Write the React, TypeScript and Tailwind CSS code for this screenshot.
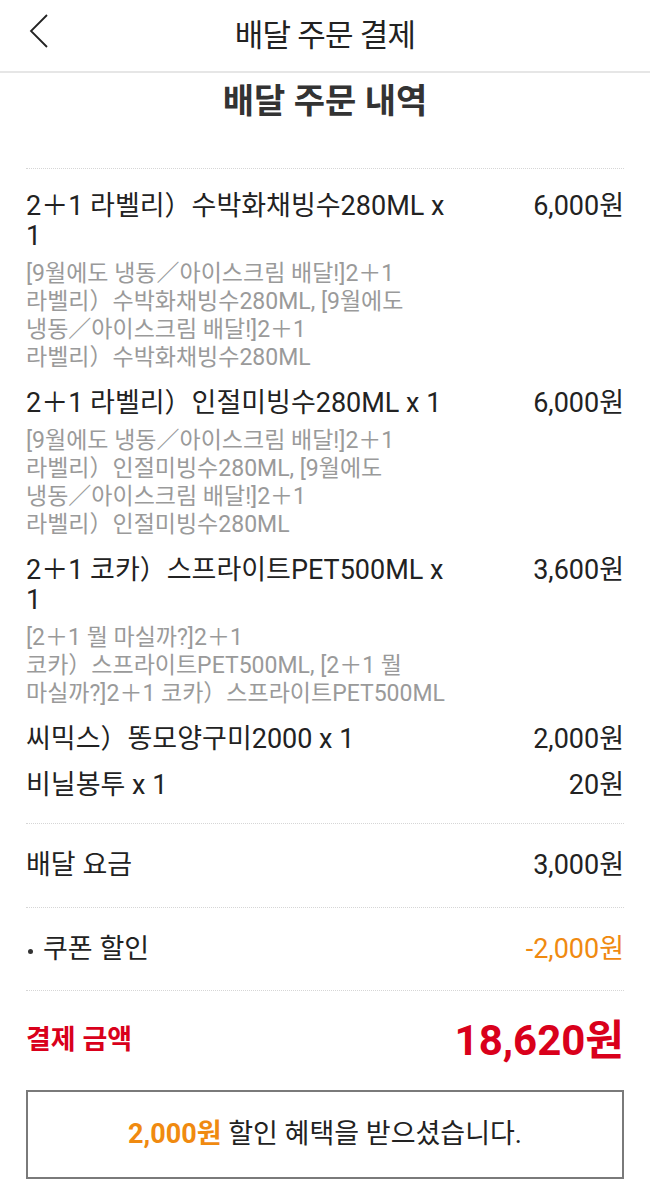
import React from 'react';

type Item = { name: string[]; price: string; options?: string[] };

const items: Item[] = [
  {
    name: ['2＋1 라벨리）수박화채빙수280ML x', '1'],
    price: '6,000원',
    options: [
      '[9월에도 냉동／아이스크림 배달!]2＋1',
      '라벨리）수박화채빙수280ML, [9월에도',
      '냉동／아이스크림 배달!]2＋1',
      '라벨리）수박화채빙수280ML',
    ],
  },
  {
    name: ['2＋1 라벨리）인절미빙수280ML x 1'],
    price: '6,000원',
    options: [
      '[9월에도 냉동／아이스크림 배달!]2＋1',
      '라벨리）인절미빙수280ML, [9월에도',
      '냉동／아이스크림 배달!]2＋1',
      '라벨리）인절미빙수280ML',
    ],
  },
  {
    name: ['2＋1 코카）스프라이트PET500ML x', '1'],
    price: '3,600원',
    options: [
      '[2＋1 뭘 마실까?]2＋1',
      '코카）스프라이트PET500ML, [2＋1 뭘',
      '마실까?]2＋1 코카）스프라이트PET500ML',
    ],
  },
  { name: ['씨믹스）똥모양구미2000 x 1'], price: '2,000원' },
  { name: ['비닐봉투 x 1'], price: '20원' },
];

const font = { fontFamily: 'Roboto, "Noto Sans CJK KR", sans-serif' };

function Dots() {
  return <div className="border-t border-dotted border-[#d6d6d6]" />;
}

export default function App() {
  return (
    <div className="w-[650px] min-h-[1195px] bg-white text-[#222]" style={font}>
      {/* header */}
      <header className="relative flex h-[73px] items-center justify-center border-b-2 border-[#e6e6e6]">
        <button className="absolute left-[26px] top-[11px]">
          <svg width="26" height="40" viewBox="0 0 26 40" fill="none">
            <path d="M21 4 L5 20 L21 36" stroke="#222" strokeWidth="1.8" />
          </svg>
        </button>
        <h1 className="text-[31px] leading-[40px] tracking-tight">배달 주문 결제</h1>
      </header>

      <div className="px-[26px]">
        <h2 className="pt-[8px] text-center text-[34px] font-bold leading-[40px] text-[#333]">배달 주문 내역</h2>

        <div className="mt-[47px]">
          <Dots />
        </div>

        {/* order items */}
        <div className="flex flex-col gap-[16px] pt-[22px] pb-[23px]">
          {items.map((it) => (
            <div key={it.name.join('')}>
              <div className="flex justify-between text-[27px] leading-[30px]">
                <div>
                  {it.name.map((l) => (
                    <p key={l} className="whitespace-nowrap">{l}</p>
                  ))}
                </div>
                <p className="whitespace-nowrap">{it.price}</p>
              </div>
              {it.options && (
                <div className="mt-[9px] text-[23px] leading-[28px] text-[#9a9a9a]">
                  {it.options.map((l) => (
                    <p key={l} className="whitespace-nowrap">{l}</p>
                  ))}
                </div>
              )}
            </div>
          ))}
        </div>

        <Dots />
        <div className="flex h-[83px] items-center justify-between text-[27px]">
          <span>배달 요금</span>
          <span>3,000원</span>
        </div>
        <Dots />
        <div className="flex h-[82px] items-center justify-between text-[27px]">
          <span className="flex items-center">
            <span className="ml-[2px] mr-[10px] mt-[4px] h-[5px] w-[5px] rounded-full bg-[#333]" />
            쿠폰 할인
          </span>
          <span className="text-[#f08a10]">-2,000원</span>
        </div>
        <Dots />

        <div className="flex h-[99px] items-center justify-between">
          <span className="text-[27px] font-bold text-[#d9001b]">결제 금액</span>
          <span className="text-[42px] font-bold text-[#d9001b]">18,620원</span>
        </div>

        <div className="flex h-[89px] items-center justify-center border-2 border-[#7a7a7a] text-[27px]">
          <span>
            <span className="font-bold text-[#f08a10]">2,000원</span> 할인 혜택을 받으셨습니다.
          </span>
        </div>
      </div>
    </div>
  );
}
